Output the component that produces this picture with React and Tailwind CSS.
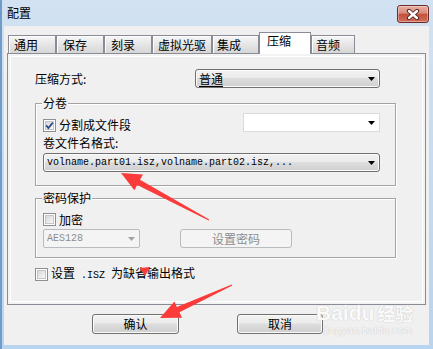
import React from "react";

function DropArrow({ color = "#000" }) {
  return (
    <svg width="7" height="4" viewBox="0 0 7 4" className="shrink-0">
      <polygon points="0,0 7,0 3.5,4" fill={color} />
    </svg>
  );
}

function Check({ checked }) {
  return (
    <span className="relative w-[13px] h-[13px] shrink-0 border border-[#8e8f8f] bg-white flex items-center justify-center">
      <span className="w-[9px] h-[9px] border border-[#c6c6c6] bg-linear-to-br from-[#d8d8d8] to-[#f8f8f8]" />
      {checked && (
        <svg width="13" height="13" viewBox="0 0 13 13" className="absolute -left-px -top-px">
          <path d="M3.2 6.4 L5.4 9 L9.8 3.6" fill="none" stroke="#2f4f8f" strokeWidth="1.8" />
        </svg>
      )}
    </span>
  );
}

function Tab({ className, children }) {
  return (
    <div
      className={
        "h-[18px] shrink-0 border border-b-0 border-[#898c95] bg-linear-to-b from-[#f6f6f6] to-[#d6d6d6] pt-[2px] shadow-[inset_1px_1px_0_#fdfdfd] " +
        className
      }
    >
      {children}
    </div>
  );
}

const mono = "font-['Liberation_Mono',monospace] text-[10px]";

export default function App() {
  return (
    <div className="w-[433px] h-[349px] relative overflow-hidden flex flex-col bg-linear-to-b from-[#d2e2f2] to-[#b9d4ee] border-l-2 border-[#6f9ccb] font-['Noto_Sans_CJK_SC',sans-serif] text-[12px] leading-[14px] text-black">
      {/* Title bar */}
      <div className="h-[26px] shrink-0 flex justify-between items-start">
        <div className="mt-[6px] ml-[5px]">配置</div>
        <div className="mt-[5px] mr-[4px] w-[32px] h-[18px] rounded-[3px] border border-[#6d2b25] bg-[linear-gradient(#e9aea2,#d88a7a_45%,#c4503e_52%,#cf6e5a)] shadow-[inset_0_0_0_1px_rgba(255,255,255,0.35)] flex items-center justify-center">
          <svg width="14" height="11" viewBox="0 0 14 11">
            <path d="M3 2 L11 9 M11 2 L3 9" stroke="#4a1d18" strokeWidth="4.2" strokeLinecap="round" />
            <path d="M3 2 L11 9 M11 2 L3 9" stroke="#ffffff" strokeWidth="2.4" strokeLinecap="round" />
          </svg>
        </div>
      </div>

      {/* Client area */}
      <div className="flex-1 ml-[2px] mr-[4px] mb-[4px] bg-[#f0f0f0] flex flex-col pt-[6px]">
        {/* Tabs */}
        <div className="relative z-10 flex items-end h-[21px] pl-[4px] shrink-0">
          <Tab className="w-[48px] pl-[5px]">通用</Tab>
          <Tab className="w-[48px] pl-[6px]">保存</Tab>
          <Tab className="w-[48px] pl-[6px]">刻录</Tab>
          <Tab className="w-[60px] pl-[5px]">虚拟光驱</Tab>
          <Tab className="w-[47px] pl-[4px]">集成</Tab>
          <div className="w-[52px] h-[22px] -mb-px shrink-0 bg-white border border-b-0 border-[#898c95] pl-[7px] pt-[1px]">
            压缩
          </div>
          <Tab className="w-[44px] pl-[4px]">音频</Tab>
        </div>

        {/* Tab page */}
        <div className="ml-[3px] w-[419px] h-[252px] shrink-0 border border-[#898c95] bg-[#f0f0f0] shadow-[inset_0_0_0_2px_#f3f3f3,inset_0_0_0_3px_#ffffff] flex flex-col pl-[27px] pt-[15px]">
          {/* compression mode */}
          <div className="flex items-center h-[19px]">
            <span className="w-[160px] shrink-0">压缩方式:</span>
            <div className="w-[185px] h-[19px] shrink-0 rounded-[3px] border border-[#707070] bg-[linear-gradient(#f2f2f2,#ebebeb_45%,#dddddd_50%,#cfcfcf)] shadow-[inset_0_0_0_1px_#fbfbfb] flex items-center justify-between pl-[3px] pr-[4px]">
              <span className="underline underline-offset-[2px]">普通</span>
              <DropArrow />
            </div>
          </div>

          {/* 分卷 group */}
          <div className="relative mt-[15px] w-[361px] border border-[#a3a3a3] shadow-[1px_1px_0_#ffffff,inset_1px_1px_0_#ffffff] pt-[9px] pb-[13px] pl-[7px] pr-[15px] flex flex-col">
            <span className="absolute top-[-8px] left-[6px] px-[1px] bg-[#f0f0f0]">分卷</span>
            <div className="flex justify-between items-start h-[19px]">
              <div className="flex items-center gap-[3px] mt-[5px]">
                <Check checked />
                <span>分割成文件段</span>
              </div>
              <div className="w-[137px] h-[19px] shrink-0 border border-[#d9dcdf] bg-white flex items-center justify-end pr-[4px]">
                <DropArrow />
              </div>
            </div>
            <div className="h-[21px] flex items-center">卷文件名格式:</div>
            <div className="w-[337px] h-[19px] rounded-[3px] border border-[#707070] bg-[linear-gradient(#f2f2f2,#ebebeb_45%,#dddddd_50%,#cfcfcf)] shadow-[inset_0_0_0_1px_#fbfbfb] flex items-center justify-between pl-[3px] pr-[4px]">
              <span className={mono}>volname.part01.isz,volname.part02.isz,...</span>
              <DropArrow />
            </div>
          </div>

          {/* 密码保护 group */}
          <div className="relative mt-[12px] w-[361px] border border-[#a3a3a3] shadow-[1px_1px_0_#ffffff,inset_1px_1px_0_#ffffff] pt-[14px] pb-[9px] pl-[7px] flex flex-col">
            <span className="absolute top-[-8px] left-[6px] px-[1px] bg-[#f0f0f0]">密码保护</span>
            <div className="flex items-center gap-[3px] h-[13px]">
              <Check />
              <span>加密</span>
            </div>
            <div className="flex items-center mt-[3px] h-[19px]">
              <div className="w-[97px] h-[19px] shrink-0 rounded-[2px] border border-[#b8bcbf] bg-[#f4f4f4] flex items-center justify-between pl-[3px] pr-[4px]">
                <span className={mono + " text-[#8d8d8d]"}>AES128</span>
                <DropArrow color="#a3a3a3" />
              </div>
              <div className="ml-[40px] w-[112px] h-[19px] shrink-0 rounded-[3px] border border-[#b8bcbf] bg-[#f4f4f4] flex items-center justify-center text-[#8d8d8d]">
                设置密码
              </div>
            </div>
          </div>

          {/* default format */}
          <div className="flex items-center gap-[3px] mt-[10px] h-[13px]">
            <Check />
            <span className="whitespace-pre">
              设置<span className={mono}> .ISZ </span>为缺省输出格式
            </span>
          </div>
        </div>

        {/* Buttons */}
        <div className="flex mt-[9px] pl-[88px]">
          <div className="w-[87px] h-[20px] rounded-[3px] border border-[#707070] bg-[linear-gradient(#f2f2f2,#ebebeb_45%,#dddddd_50%,#cfcfcf)] shadow-[inset_0_0_0_1px_#fbfbfb] flex items-center justify-center">
            确认
          </div>
          <div className="ml-[58px] w-[86px] h-[20px] rounded-[3px] border border-[#707070] bg-[linear-gradient(#f2f2f2,#ebebeb_45%,#dddddd_50%,#cfcfcf)] shadow-[inset_0_0_0_1px_#fbfbfb] flex items-center justify-center">
            取消
          </div>
        </div>
      </div>

      {/* Watermark */}
      <div className="absolute left-[314px] top-[302px] flex flex-col items-start text-[#fafafa] [text-shadow:0_0_1px_#cbcbcb,0_0_1px_#cbcbcb] pointer-events-none">
        <div className="flex items-end gap-[3px] font-['Liberation_Sans',sans-serif] font-bold text-[21px] leading-[22px]">
          <span>Baidu</span>
          <span className="font-['Noto_Sans_CJK_SC',sans-serif] text-[18px] leading-[22px]">经验</span>
        </div>
        <div className="ml-[8px] font-['Liberation_Sans',sans-serif] text-[11px] leading-[13px]">jingyan.baidu.com</div>
      </div>

      {/* Red annotation arrows */}
      <svg className="absolute left-0 top-0 pointer-events-none" width="433" height="349" viewBox="0 0 433 349">
        <polygon
          points="119,173 141,174.5 138,179.8 207.3,219.4 206.7,220.6 135.2,185 132.4,190.3"
          fill="#fb3a3a"
        />
        <polygon
          points="158,318 172.4,301.4 174.9,306.9 229.7,284.4 230.3,285.6 177.5,312.3 180,317.8"
          fill="#fb3a3a"
        />
        <polygon points="138,268 148,267 143,276" fill="#fb3a3a" />
      </svg>
    </div>
  );
}
